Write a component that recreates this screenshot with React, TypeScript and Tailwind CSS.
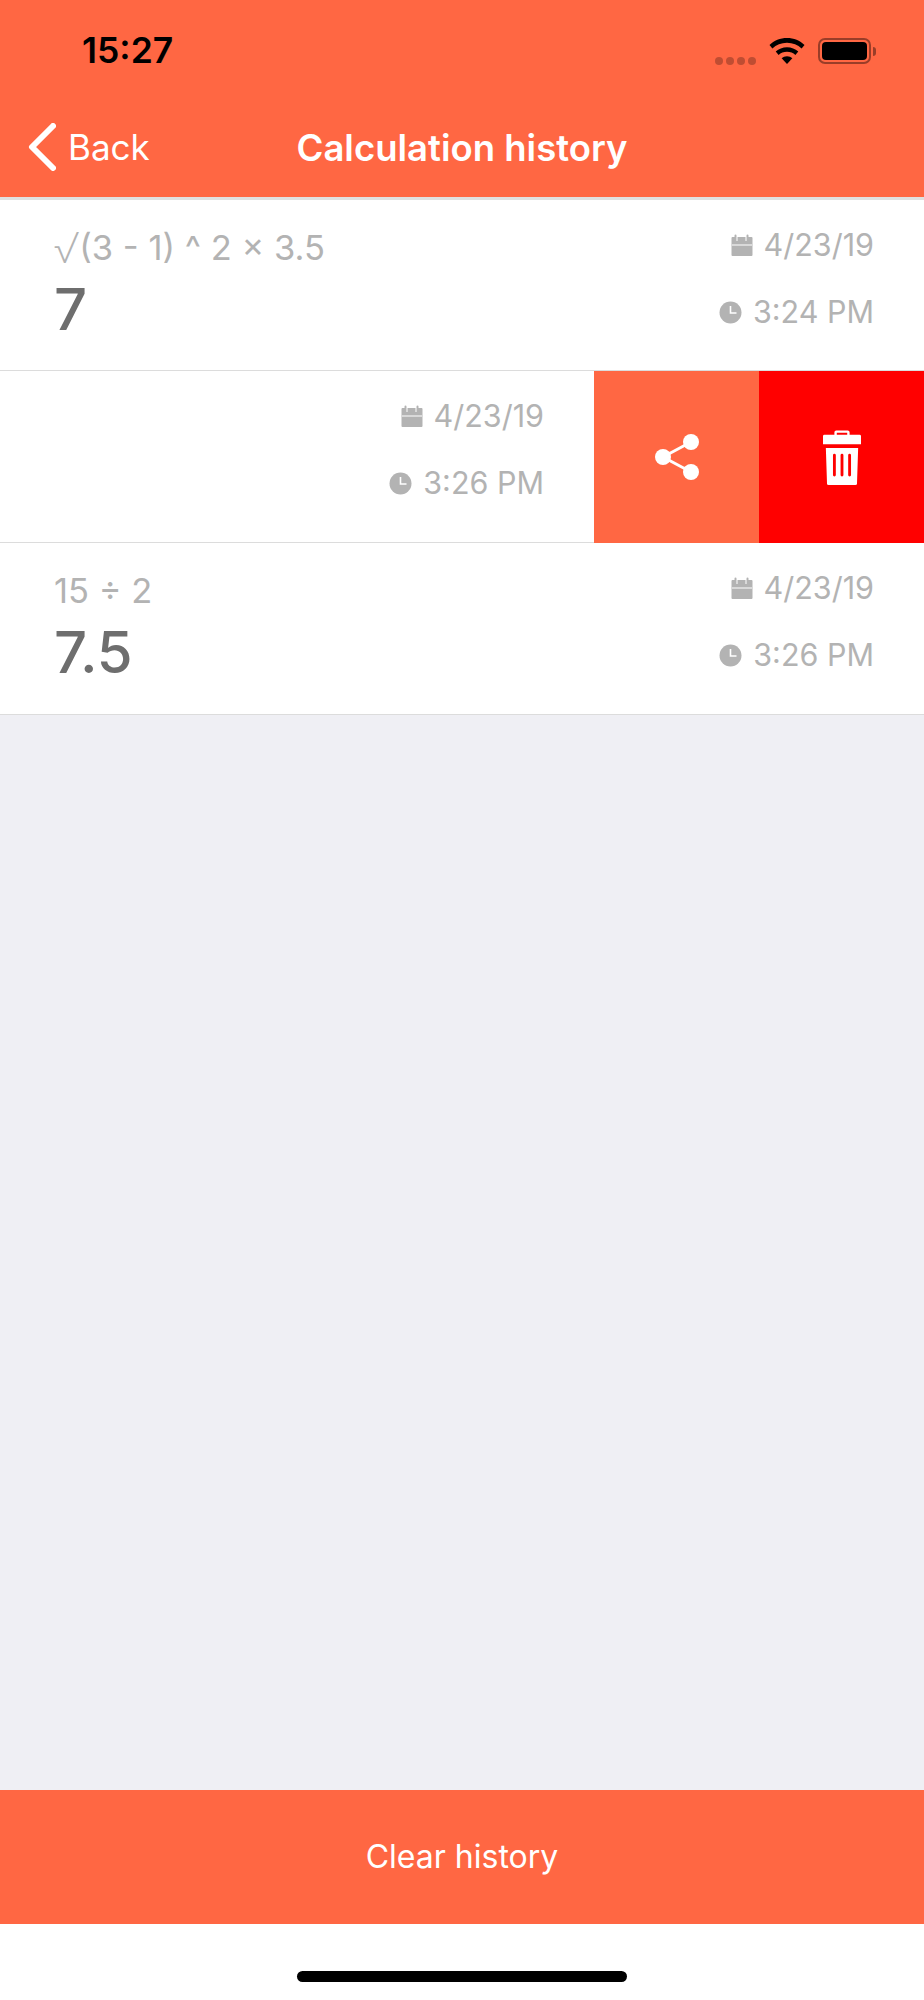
const font = { fontFamily: 'Inter, "Noto Sans", sans-serif' };

function CalendarIcon() {
  return (
    <svg width="23" height="23" viewBox="0 0 23 23" className="shrink-0">
      <path fill="#b3b3b3" fillRule="evenodd" d="M1.5 3h3V1.5a1 1 0 0 1 2 0V7h1V3h8v4h1V1.5a1 1 0 0 1 2 0V3h3a1 1 0 0 1 1 1v17a1 1 0 0 1-1 1h-19a1 1 0 0 1-1-1V4a1 1 0 0 1 1-1Zm-.5 7.5v1h21v-1H1Z" />
    </svg>
  );
}

function ClockIcon() {
  return (
    <svg width="23" height="23" viewBox="0 0 23 23" className="shrink-0">
      <circle cx="11.5" cy="11.5" r="11" fill="#b3b3b3" />
      <path d="M11.5 5v7h6" fill="none" stroke="#fff" strokeWidth="1.6" />
    </svg>
  );
}

function ShareIcon() {
  return (
    <svg width="46" height="46" viewBox="0 0 46 46" fill="#fff">
      <circle cx="9" cy="23" r="8" />
      <circle cx="37" cy="8" r="8" />
      <circle cx="37" cy="38" r="8" />
      <path d="M9 23 37 8M9 23l28 15" stroke="#fff" strokeWidth="3" />
    </svg>
  );
}

function TrashIcon() {
  return (
    <svg width="38" height="55" viewBox="0 0 40 58" preserveAspectRatio="none" fill="#fff">
      <path fillRule="evenodd" d="M12 5V2.500A2 2 0 0 1 14 .5h12a2 2 0 0 1 2 2V5h10.500A1.500 1.500 0 0 1 40 6.500V15H0V6.500A1.500 1.500 0 0 1 1.500 5H12Zm2.500 0h11V3h-11v2Z" />
      <path fillRule="evenodd" d="M3 19h34l-1.200 37a1.800 1.800 0 0 1-1.800 2H6a1.800 1.800 0 0 1-1.800-2L3 19Zm9 6a1.500 1.500 0 0 0-1.500 1.500v21a1.500 1.500 0 0 0 3 0v-21A1.500 1.500 0 0 0 12 25Zm8 0a1.500 1.500 0 0 0-1.500 1.500v21a1.500 1.500 0 0 0 3 0v-21A1.500 1.500 0 0 0 20 25Zm8 0a1.500 1.500 0 0 0-1.500 1.500v21a1.500 1.500 0 0 0 3 0v-21A1.500 1.500 0 0 0 28 25Z" />
    </svg>
  );
}

function WifiIcon() {
  return (
    <svg width="36" height="26" viewBox="0 0 37 27" preserveAspectRatio="none" fill="#000">
      <path d="M18.500 0C11.500 0 5.200 2.700.5 7.200l3 3.600C7.300 7.100 12.600 4.900 18.500 4.900s11.200 2.200 15 5.900l3-3.600C31.800 2.700 25.500 0 18.500 0Z" />
      <path d="M18.500 9.500c-4.500 0-8.500 1.700-11.600 4.500l3 3.600c2.200-2 5.200-3.200 8.600-3.200s6.400 1.200 8.600 3.200l3-3.600c-3.100-2.800-7.100-4.500-11.600-4.500Z" />
      <path d="M18.500 19c-2.200 0-4.100.8-5.500 2.100l5.500 5.900 5.500-5.900c-1.400-1.300-3.300-2.100-5.500-2.100Z" />
    </svg>
  );
}

function Battery() {
  return (
    <div className="flex items-center">
      <div className="flex h-[26px] w-[53px] items-center justify-center rounded-[7px] border-2 border-black/40">
        <div className="h-[18px] w-[45px] rounded-[4px] bg-black" />
      </div>
      <div className="ml-[2px] h-[9px] w-[3px] rounded-r-full bg-black/40" />
    </div>
  );
}

function DateTime({ date, time }: { date: string; time: string }) {
  return (
    <div className="flex flex-col items-end gap-[27px] pt-[25px] text-[30.5px] leading-[40px] text-[#b3b3b3]">
      <div className="flex items-center gap-[11px]">
        <CalendarIcon />
        <span>{date}</span>
      </div>
      <div className="flex items-center gap-[11px]">
        <ClockIcon />
        <span>{time}</span>
      </div>
    </div>
  );
}

function HistoryRow({ formula, result, date, time, height }: { formula: React.ReactNode; result: string; date: string; time: string; height: string }) {
  return (
    <div className={`flex ${height} justify-between border-b border-[#dcdcdc] bg-white pr-[50px] pl-[54px]`}>
      <div className="pt-[25px]">
        <div className="flex h-[46px] items-center text-[34.5px] leading-[46px] text-[#b3b3b3]">{formula}</div>
        <div className="mt-[3px] text-[58px] leading-[70px] font-medium text-[#6e6e6e]">{result}</div>
      </div>
      <DateTime date={date} time={time} />
    </div>
  );
}

export default function App() {
  return (
    <div style={font} className="flex h-[2000px] w-[924px] flex-col bg-[#efeff4]">
      <div className="bg-[#ff6743]">
        <div className="flex h-[88px] items-center justify-between pt-[14px] pr-[48px] pl-[82px]">
          <span className="text-[35.5px] leading-[40px] font-semibold text-black">15:27</span>
          <div className="flex items-center">
            <div className="mt-[19px] mr-[13px] flex gap-[3px]">
              <span className="h-[8px] w-[8px] rounded-full bg-black/25" />
              <span className="h-[8px] w-[8px] rounded-full bg-black/25" />
              <span className="h-[8px] w-[8px] rounded-full bg-black/25" />
              <span className="h-[8px] w-[8px] rounded-full bg-black/25" />
            </div>
            <WifiIcon />
            <div className="ml-[13px]">
              <Battery />
            </div>
          </div>
        </div>
        <div className="relative flex h-[109px] items-center justify-center pt-[10px]">
          <div className="absolute top-[35px] left-[28px] flex items-center text-white">
            <svg width="28" height="48" viewBox="0 0 28 48" fill="none" stroke="#fff" strokeWidth="6" strokeLinecap="round" strokeLinejoin="round">
              <path d="M25 3 4 24l21 21" />
            </svg>
            <span className="ml-[12px] text-[35px] leading-[44px]">Back</span>
          </div>
          <span className="text-[36.5px] leading-[44px] font-semibold text-white">Calculation history</span>
        </div>
      </div>
      <div className="h-[3px] bg-[#e0e0e0]" />
      <HistoryRow
        height="h-[171px]"
        formula={
          <>
            <span className="text-[42px] leading-[46px] font-extralight">√</span>
            <span>(3 - 1) ^ 2 × 3.5</span>
          </>
        }
        result="7"
        date="4/23/19"
        time="3:24 PM"
      />
      <div className="flex h-[172px] bg-white">
        <div className="flex w-[594px] justify-end border-b border-[#dcdcdc] pr-[50px]">
          <DateTime date="4/23/19" time="3:26 PM" />
        </div>
        <div className="flex w-[165px] items-center justify-center bg-[#ff6743]">
          <ShareIcon />
        </div>
        <div className="flex w-[165px] items-center justify-center bg-[#ff0000]">
          <TrashIcon />
        </div>
      </div>
      <HistoryRow height="h-[172px]" formula="15 ÷ 2" result="7.5" date="4/23/19" time="3:26 PM" />
      <div className="flex-1" />
      <div className="flex h-[134px] items-center justify-center bg-[#ff6743] text-[32px] text-white">Clear history</div>
      <div className="flex h-[76px] justify-center bg-white pt-[47px]">
        <div className="h-[11px] w-[330px] rounded-full bg-black" />
      </div>
    </div>
  );
}
